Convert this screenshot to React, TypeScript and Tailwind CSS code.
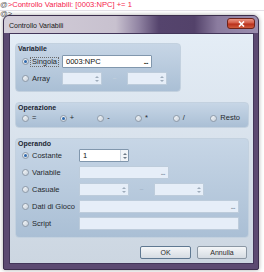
import React from 'react';

const font = "font-['Liberation_Sans',Arial,sans-serif]";

function Radio({ checked = false }: { checked?: boolean }) {
  return (
    <span className="w-[7px] h-[7px] shrink-0 rounded-full border border-[#8e9aa8] bg-gradient-to-br from-[#f6f8fa] to-[#c7d0da] flex items-center justify-center">
      {checked && <span className="w-[3px] h-[3px] rounded-full bg-[#2f69ad]" />}
    </span>
  );
}

function Arrows({ color }: { color: string }) {
  return (
    <span className="flex flex-col items-center gap-[2px]">
      <svg width="4" height="2" viewBox="0 0 4 2">
        <path d="M0 2 L2 0 L4 2 Z" fill={color} />
      </svg>
      <svg width="4" height="2" viewBox="0 0 4 2">
        <path d="M0 0 L2 2 L4 0 Z" fill={color} />
      </svg>
    </span>
  );
}

function Field({
  className,
  value,
  enabled = false,
  dots = false,
}: {
  className: string;
  value?: string;
  enabled?: boolean;
  dots?: boolean;
}) {
  return (
    <div
      className={`${className} h-[13px] shrink-0 flex items-center justify-between pl-[3px] pr-[3px] border rounded-[1px] ${
        enabled ? 'bg-white border-[#8197ad]' : 'bg-[#e6eef8] border-[#bdccdb]'
      }`}
    >
      <span className="text-[7.5px] leading-none text-[#111]">{value}</span>
      {dots && (
        <span className={`text-[7px] leading-none font-bold tracking-[-0.5px] ${enabled ? 'text-[#111]' : 'text-[#8a9aab]'}`}>
          ...
        </span>
      )}
    </div>
  );
}

function Spin({ className, value, enabled = false }: { className: string; value?: string; enabled?: boolean }) {
  return (
    <div
      className={`${className} h-[13px] shrink-0 flex items-stretch border rounded-[1px] ${
        enabled ? 'bg-white border-[#8197ad]' : 'bg-[#e6eef8] border-[#bdccdb]'
      }`}
    >
      <span className="flex-1 flex items-center pl-[3px] text-[7.5px] leading-none text-[#111]">{value}</span>
      <span
        className={`w-[8px] flex items-center justify-center ${
          enabled ? 'border-l border-[#cfd8e2] bg-[#f1f4f7]' : ''
        }`}
      >
        <Arrows color={enabled ? '#6d7986' : '#9eacbb'} />
      </span>
    </div>
  );
}

function Option({ label, checked, className, focus }: { label: string; checked?: boolean; className: string; focus?: boolean }) {
  return (
    <div className={`${className} shrink-0 flex items-center`}>
      <Radio checked={checked} />
      <span
        className={`ml-[1px] px-[1px] text-[7.5px] leading-[8px] text-[#25292e] whitespace-nowrap border border-dotted ${
          focus ? 'border-[#6b6b6b]' : 'border-transparent'
        }`}
      >
        {label}
      </span>
    </div>
  );
}

function Group({ title, className, children }: { title: string; className: string; children: React.ReactNode }) {
  return (
    <div
      className={`${className} shrink-0 rounded-[4px] border border-[#c3d1df] bg-[linear-gradient(180deg,#c7d6e6,#aabfd5)] pt-[1px]`}
    >
      <div className="pl-[2px] text-[7px] font-bold leading-[8px] text-[#1c2633]">{title}</div>
      {children}
    </div>
  );
}

function Tilde({ className }: { className: string }) {
  return <span className={`${className} shrink-0 text-center text-[7px] leading-none`}>~</span>;
}

function Window() {
  return (
    <div className="absolute left-[3px] top-[15px] w-[256px] h-[255px] rounded-t-[6px] rounded-b-[2px] border border-[#3b2e4d] bg-[#5c4a72] flex flex-col shadow-[0_0_4px_rgba(0,0,0,0.35)]">
      <div className="relative h-[17px] shrink-0 rounded-t-[5px] bg-[linear-gradient(90deg,#d3ced9_0%,#c8c1cf_44%,#9184a3_53%,#55446d_61%,#53426a_75%,#8b7c9f_84%,#9b8eaf_100%)] pl-[5px] pt-[6px]">
        <span className="block text-[7px] leading-[8px] text-[#161616] whitespace-nowrap">Controllo Variabili</span>
        <div className="absolute right-[3px] top-[2px] w-[28px] h-[11px] rounded-[3px] border border-[#6e2219] bg-[linear-gradient(180deg,#e89585_0%,#d35a45_45%,#b8301c_55%,#cf5a3c_100%)] flex items-center justify-center">
          <svg width="7" height="6" viewBox="0 0 7 6">
            <path d="M1 0.5 L6 5.5 M6 0.5 L1 5.5" stroke="#fff" strokeWidth="1.6" />
          </svg>
        </div>
      </div>
      <div className="flex-1 ml-[5px] mr-[4px] mb-[5px] border border-[#43365a] bg-[linear-gradient(180deg,#e4edf6,#ccd6e1)] flex flex-col pl-[5px] pr-[4px] pt-[9px]">
        <Group title="Variabile" className="w-[166px] h-[49px]">
          <div className="mt-[2px] h-[13px] flex items-center pl-[6px]">
            <Option label="Singola" checked focus className="w-[40px]" />
            <Field className="w-[90px]" value="0003:NPC" enabled dots />
          </div>
          <div className="mt-[4px] h-[13px] flex items-center pl-[6px]">
            <Option label="Array" className="w-[40px]" />
            <Spin className="w-[40px]" />
            <Tilde className="w-[25px] text-[#c5d1dd]" />
            <Spin className="w-[40px]" />
          </div>
        </Group>

        <Group title="Operazione" className="mt-[10px] h-[26px]">
          <div className="mt-[1px] h-[8px] grid grid-cols-6 pl-[6px]">
            <Option label="=" className="" />
            <Option label="+" checked className="" />
            <Option label="-" className="" />
            <Option label="*" className="" />
            <Option label="/" className="" />
            <Option label="Resto" className="" />
          </div>
        </Group>

        <Group title="Operando" className="mt-[10px] h-[100px]">
          <div className="mt-[1px] flex flex-col gap-[4px] pl-[6px]">
            <div className="h-[13px] flex items-center">
              <Option label="Costante" checked className="w-[57px]" />
              <Spin className="w-[50px]" value="1" enabled />
            </div>
            <div className="h-[13px] flex items-center">
              <Option label="Variabile" className="w-[57px]" />
              <Field className="w-[90px]" dots />
            </div>
            <div className="h-[13px] flex items-center">
              <Option label="Casuale" className="w-[57px]" />
              <Spin className="w-[50px]" />
              <Tilde className="w-[25px] text-[#9fb1c4]" />
              <Spin className="w-[50px]" />
            </div>
            <div className="h-[13px] flex items-center">
              <Option label="Dati di Gioco" className="w-[57px]" />
              <Field className="w-[160px]" dots />
            </div>
            <div className="h-[13px] flex items-center">
              <Option label="Script" className="w-[57px]" />
              <Field className="w-[160px]" />
            </div>
          </div>
        </Group>

        <div className="mt-[8px] mr-[2px] flex justify-end gap-[6px]">
          <button className="w-[51px] h-[13px] rounded-[2px] border border-[#5f7891] bg-[linear-gradient(180deg,#f4f6f8,#d6dce3)] text-[7px] leading-none text-[#2a2a2a]">
            OK
          </button>
          <button className="w-[50px] h-[13px] rounded-[2px] border border-[#8b97a4] bg-[linear-gradient(180deg,#f4f6f8,#d6dce3)] text-[7px] leading-none text-[#2a2a2a]">
            Annulla
          </button>
        </div>
      </div>
    </div>
  );
}

export default function App() {
  return (
    <div className={`relative w-[264px] h-[272px] overflow-hidden bg-white ${font}`}>
      <div className="h-[11px] border-b border-[#e4e1e8] flex items-center text-[7.6px] leading-none whitespace-nowrap">
        <span className="text-[#5a5a5a]">@</span>
        <span className="text-[#f5234b]">&gt;Controllo Variabili: [0003:NPC] += 1</span>
      </div>
      <div className="h-[6px] flex items-start text-[7.6px] leading-[6px] text-[#5a5a5a] whitespace-nowrap">
        <span>@&gt;</span>
      </div>
      <Window />
    </div>
  );
}
